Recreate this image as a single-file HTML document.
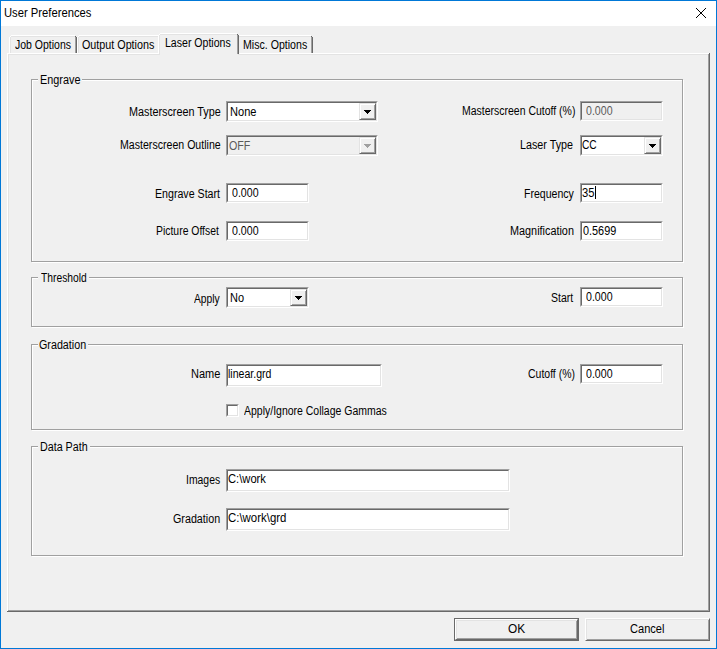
<!DOCTYPE html>
<html><head><meta charset="utf-8"><title>User Preferences</title>
<style>
*{margin:0;padding:0;box-sizing:border-box}
html,body{width:717px;height:649px;overflow:hidden;background:#f0f0f0}
body{position:relative;font-family:"Liberation Sans",sans-serif;font-size:12px;color:#000}
.a{position:absolute}
.t{position:absolute;white-space:nowrap;line-height:15px;font-size:12px;transform-origin:0 0}
#frame{position:absolute;left:0;top:0;width:717px;height:649px;border:1px solid #0078d7}
#title{position:absolute;left:1px;top:1px;width:715px;height:25px;background:#fff}
.grp{position:absolute;border:1px solid #a0a0a0;box-shadow:inset 1px 1px 0 #fff,1px 1px 0 #fff}
.sunk{position:absolute;background:#fff;border-style:solid;border-width:1px;border-color:#a0a0a0 #fff #fff #a0a0a0}
.sunk>i{position:absolute;left:0;top:0;right:0;bottom:0;border-style:solid;border-width:1px;border-color:#696969 #e3e3e3 #e3e3e3 #696969}
.dis{background:#f0f0f0}
.btn{position:absolute;background:#f0f0f0;border-style:solid;border-width:1px;border-color:#fff #696969 #696969 #fff;box-shadow:inset 1px 1px 0 #e3e3e3,inset -1px -1px 0 #a0a0a0}
.cbtn{position:absolute;background:#f0f0f0;border-style:solid;border-width:1px;border-color:#e3e3e3 #696969 #696969 #e3e3e3;box-shadow:inset 1px 1px 0 #fff,inset -1px -1px 0 #a0a0a0}
.arrow{position:absolute;left:4px;top:6px}
</style></head><body>
<div id="title"></div>
<svg class="a" style="left:696px;top:8px" width="10" height="10" viewBox="0 0 10 10" shape-rendering="crispEdges" fill="#000"><rect x="0" y="0" width="1" height="1"/><rect x="9" y="0" width="1" height="1"/><rect x="1" y="1" width="1" height="1"/><rect x="8" y="1" width="1" height="1"/><rect x="2" y="2" width="1" height="1"/><rect x="7" y="2" width="1" height="1"/><rect x="3" y="3" width="1" height="1"/><rect x="6" y="3" width="1" height="1"/><rect x="4" y="4" width="1" height="1"/><rect x="5" y="4" width="1" height="1"/><rect x="5" y="5" width="1" height="1"/><rect x="4" y="5" width="1" height="1"/><rect x="6" y="6" width="1" height="1"/><rect x="3" y="6" width="1" height="1"/><rect x="7" y="7" width="1" height="1"/><rect x="2" y="7" width="1" height="1"/><rect x="8" y="8" width="1" height="1"/><rect x="1" y="8" width="1" height="1"/><rect x="9" y="9" width="1" height="1"/><rect x="0" y="9" width="1" height="1"/></svg>
<div class="a" style="left:7px;top:53px;width:702px;height:1px;background:#fff"></div>
<div class="a" style="left:7px;top:53px;width:1px;height:558px;background:#fff"></div>
<div class="a" style="left:8px;top:54px;width:700px;height:1px;background:#e3e3e3"></div>
<div class="a" style="left:8px;top:54px;width:1px;height:556px;background:#e3e3e3"></div>
<div class="a" style="left:709px;top:53px;width:1px;height:559px;background:#696969"></div>
<div class="a" style="left:7px;top:611px;width:703px;height:1px;background:#696969"></div>
<div class="a" style="left:708px;top:54px;width:1px;height:557px;background:#a0a0a0"></div>
<div class="a" style="left:8px;top:610px;width:701px;height:1px;background:#a0a0a0"></div>
<div class="a" style="left:11px;top:35px;width:64px;height:1px;background:#fff"></div>
<div class="a" style="left:11px;top:36px;width:64px;height:1px;background:#e3e3e3"></div>
<div class="a" style="left:10px;top:36px;width:1px;height:1px;background:#fff"></div>
<div class="a" style="left:9px;top:37px;width:1px;height:16px;background:#fff"></div>
<div class="a" style="left:10px;top:37px;width:1px;height:16px;background:#e3e3e3"></div>
<div class="a" style="left:75px;top:36px;width:1px;height:1px;background:#696969"></div>
<div class="a" style="left:76px;top:37px;width:1px;height:16px;background:#696969"></div>
<div class="a" style="left:75px;top:37px;width:1px;height:16px;background:#a0a0a0"></div>
<div class="a" style="left:79px;top:35px;width:80px;height:1px;background:#fff"></div>
<div class="a" style="left:79px;top:36px;width:80px;height:1px;background:#e3e3e3"></div>
<div class="a" style="left:78px;top:36px;width:1px;height:1px;background:#fff"></div>
<div class="a" style="left:77px;top:37px;width:1px;height:16px;background:#fff"></div>
<div class="a" style="left:78px;top:37px;width:1px;height:16px;background:#e3e3e3"></div>
<div class="a" style="left:239px;top:35px;width:72px;height:1px;background:#fff"></div>
<div class="a" style="left:239px;top:36px;width:72px;height:1px;background:#e3e3e3"></div>
<div class="a" style="left:311px;top:36px;width:1px;height:1px;background:#696969"></div>
<div class="a" style="left:312px;top:37px;width:1px;height:16px;background:#696969"></div>
<div class="a" style="left:311px;top:37px;width:1px;height:16px;background:#a0a0a0"></div>
<div class="a" style="left:159px;top:34px;width:79px;height:21px;background:#f0f0f0"></div>
<div class="a" style="left:160px;top:33px;width:77px;height:1px;background:#fff"></div>
<div class="a" style="left:160px;top:34px;width:77px;height:1px;background:#e3e3e3"></div>
<div class="a" style="left:159px;top:34px;width:1px;height:1px;background:#fff"></div>
<div class="a" style="left:158px;top:35px;width:1px;height:19px;background:#fff"></div>
<div class="a" style="left:159px;top:35px;width:1px;height:20px;background:#e3e3e3"></div>
<div class="a" style="left:237px;top:34px;width:1px;height:1px;background:#696969"></div>
<div class="a" style="left:238px;top:35px;width:1px;height:19px;background:#696969"></div>
<div class="a" style="left:237px;top:35px;width:1px;height:19px;background:#a0a0a0"></div>
<div class="grp" style="left:31px;top:79px;width:652px;height:183px"></div><div class="a" style="left:38px;top:77px;width:44px;height:4px;background:#f0f0f0"></div>
<div class="grp" style="left:31px;top:277px;width:652px;height:50px"></div><div class="a" style="left:38px;top:275px;width:51px;height:4px;background:#f0f0f0"></div>
<div class="grp" style="left:31px;top:344px;width:652px;height:86px"></div><div class="a" style="left:38px;top:342px;width:50px;height:4px;background:#f0f0f0"></div>
<div class="grp" style="left:31px;top:446px;width:652px;height:110px"></div><div class="a" style="left:38px;top:444px;width:52px;height:4px;background:#f0f0f0"></div>
<div class="sunk" style="left:226px;top:101px;width:152px;height:21px"><i></i><div class="cbtn" style="right:1px;top:1px;width:17px;height:17px"><svg class="arrow" width="7" height="4" viewBox="0 0 7 4" shape-rendering="crispEdges"><path d="M0 0h7v1h-1v1h-1v1h-1v1h-1v-1h-1v-1h-1v-1h-1z" fill="#000"/></svg></div></div>
<div class="sunk dis" style="left:226px;top:135px;width:152px;height:21px"><i></i><div class="cbtn" style="right:1px;top:1px;width:17px;height:17px"><svg class="arrow" width="7" height="4" viewBox="0 0 7 4" shape-rendering="crispEdges"><path d="M0 0h7v1h-1v1h-1v1h-1v1h-1v-1h-1v-1h-1v-1h-1z" fill="#a0a0a0"/></svg></div></div>
<div class="sunk" style="left:226px;top:183px;width:83px;height:20px"><i></i></div>
<div class="sunk" style="left:226px;top:221px;width:83px;height:20px"><i></i></div>
<div class="sunk dis" style="left:580px;top:101px;width:83px;height:20px"><i></i></div>
<div class="sunk" style="left:580px;top:135px;width:83px;height:21px"><i></i><div class="cbtn" style="right:1px;top:1px;width:17px;height:17px"><svg class="arrow" width="7" height="4" viewBox="0 0 7 4" shape-rendering="crispEdges"><path d="M0 0h7v1h-1v1h-1v1h-1v1h-1v-1h-1v-1h-1v-1h-1z" fill="#000"/></svg></div></div>
<div class="sunk" style="left:580px;top:183px;width:83px;height:20px"><i></i></div>
<div class="a" style="left:595px;top:186px;width:1px;height:13px;background:#000"></div>
<div class="sunk" style="left:580px;top:221px;width:83px;height:20px"><i></i></div>
<div class="sunk" style="left:226px;top:287px;width:83px;height:21px"><i></i><div class="cbtn" style="right:1px;top:1px;width:17px;height:17px"><svg class="arrow" width="7" height="4" viewBox="0 0 7 4" shape-rendering="crispEdges"><path d="M0 0h7v1h-1v1h-1v1h-1v1h-1v-1h-1v-1h-1v-1h-1z" fill="#000"/></svg></div></div>
<div class="sunk" style="left:580px;top:287px;width:83px;height:20px"><i></i></div>
<div class="sunk" style="left:226px;top:364px;width:156px;height:23px"><i></i></div>
<div class="sunk" style="left:580px;top:364px;width:83px;height:20px"><i></i></div>
<div class="sunk" style="left:226px;top:404px;width:13px;height:13px"><i></i></div>
<div class="sunk" style="left:226px;top:469px;width:284px;height:23px"><i></i></div>
<div class="sunk" style="left:226px;top:508px;width:284px;height:23px"><i></i></div>
<div class="a" style="left:454px;top:618px;width:125px;height:23px;border:1px solid #696969"><div class="btn" style="left:0;top:0;width:123px;height:21px"></div></div>
<div class="btn" style="left:585px;top:618px;width:125px;height:23px"></div>
<div class="t" style="left:3.86px;top:6px;transform:scaleX(0.9370)">User Preferences</div>
<div class="t" style="left:14.50px;top:38px;transform:scaleX(0.8750)">Job Options</div>
<div class="t" style="left:81.60px;top:38px;transform:scaleX(0.8962)">Output Options</div>
<div class="t" style="left:165.42px;top:36px;transform:scaleX(0.8795)">Laser Options</div>
<div class="t" style="left:242.82px;top:38px;transform:scaleX(0.8831)">Misc. Options</div>
<div class="t" style="left:39.70px;top:73px;transform:scaleX(0.9047)">Engrave</div>
<div class="t" style="left:40.60px;top:271px;transform:scaleX(0.8566)">Threshold</div>
<div class="t" style="left:38.91px;top:338px;transform:scaleX(0.8941)">Gradation</div>
<div class="t" style="left:39.71px;top:440px;transform:scaleX(0.8923)">Data Path</div>
<div class="t" style="left:128.60px;top:105px;transform:scaleX(0.9000)">Masterscreen Type</div>
<div class="t" style="left:119.52px;top:138px;transform:scaleX(0.8830)">Masterscreen Outline</div>
<div class="t" style="left:154.51px;top:187px;transform:scaleX(0.8861)">Engrave Start</div>
<div class="t" style="left:155.83px;top:224px;transform:scaleX(0.8681)">Picture Offset</div>
<div class="t" style="left:194.10px;top:292px;transform:scaleX(0.8567)">Apply</div>
<div class="t" style="left:191.08px;top:367px;transform:scaleX(0.9167)">Name</div>
<div class="t" style="left:185.63px;top:473px;transform:scaleX(0.8684)">Images</div>
<div class="t" style="left:172.81px;top:512px;transform:scaleX(0.8941)">Gradation</div>
<div class="t" style="left:461.53px;top:104px;transform:scaleX(0.8734)">Masterscreen Cutoff (%)</div>
<div class="t" style="left:520.40px;top:138px;transform:scaleX(0.8966)">Laser Type</div>
<div class="t" style="left:523.52px;top:187px;transform:scaleX(0.8786)">Frequency</div>
<div class="t" style="left:510.30px;top:224px;transform:scaleX(0.9043)">Magnification</div>
<div class="t" style="left:551.42px;top:291px;transform:scaleX(0.8750)">Start</div>
<div class="t" style="left:527.53px;top:367px;transform:scaleX(0.8731)">Cutoff (%)</div>
<div class="t" style="left:229.68px;top:105px;transform:scaleX(0.9222)">None</div>
<div class="t" style="left:228.61px;top:139px;transform:scaleX(0.8913);color:#5a5a5a">OFF</div>
<div class="t" style="left:586.30px;top:104px;transform:scaleX(0.8833);color:#5a5a5a">0.000</div>
<div class="t" style="left:582.05px;top:138px;transform:scaleX(0.8500)">CC</div>
<div class="t" style="left:232.30px;top:186px;transform:scaleX(0.8833)">0.000</div>
<div class="t" style="left:232.30px;top:224px;transform:scaleX(0.8833)">0.000</div>
<div class="t" style="left:582.27px;top:186px;transform:scaleX(0.9333)">35</div>
<div class="t" style="left:583.20px;top:224px;transform:scaleX(0.9056)">0.5699</div>
<div class="t" style="left:229.69px;top:291px;transform:scaleX(0.9143)">No</div>
<div class="t" style="left:586.30px;top:290px;transform:scaleX(0.8833)">0.000</div>
<div class="t" style="left:228.32px;top:367px;transform:scaleX(0.8792)">linear.grd</div>
<div class="t" style="left:586.30px;top:367px;transform:scaleX(0.8833)">0.000</div>
<div class="t" style="left:227.97px;top:472px;transform:scaleX(0.9325)">C:\work</div>
<div class="t" style="left:227.95px;top:511px;transform:scaleX(0.9517)">C:\work\grd</div>
<div class="t" style="left:244.00px;top:404px;transform:scaleX(0.8736)">Apply/Ignore Collage Gammas</div>
<div class="t" style="left:507.71px;top:622px;transform:scaleX(0.9875)">OK</div>
<div class="t" style="left:629.58px;top:622px;transform:scaleX(0.9222)">Cancel</div>
<div id="frame"></div>
</body></html>
